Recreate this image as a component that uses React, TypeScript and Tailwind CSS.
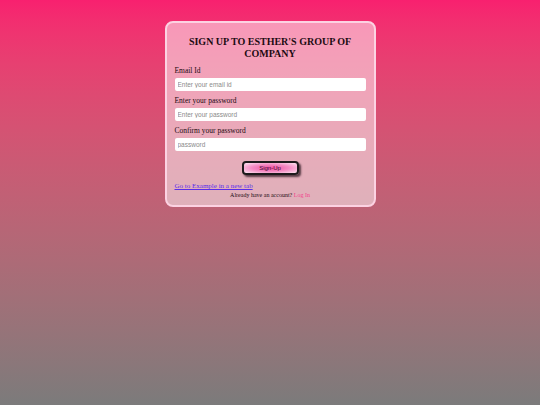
import React from 'react';

export default function App() {
  return (
    <div className="min-h-[405px] w-full bg-gradient-to-b from-[#f8206f] to-[#7b7b7b] pt-[21px] font-['Liberation_Serif',serif]">
      <div className="mx-auto w-[211px] rounded-[8px] border-2 border-[#fcd2e2] bg-white/50 px-[8px] pt-[13px] pb-[6px] text-[#1c0b12]">
        <h2 className="text-center text-[10px] font-bold leading-[11.5px]">
          SIGN UP TO ESTHER'S GROUP OF COMPANY
        </h2>

        <form className="mt-[7px]" onSubmit={(e) => e.preventDefault()}>
          <label className="block text-[7.5px] leading-[9px]">Email Id</label>
          <input
            type="email"
            placeholder="Enter your email id"
            className="mt-[3px] block h-[13px] w-full rounded-[2px] bg-white px-[3px] font-['Liberation_Sans',sans-serif] text-[6.5px] outline-none placeholder:text-[#8a8a8a]"
          />

          <label className="mt-[5px] block text-[7.5px] leading-[9px]">Enter your password</label>
          <input
            type="password"
            placeholder="Enter your password"
            className="mt-[3px] block h-[13px] w-full rounded-[2px] bg-white px-[3px] font-['Liberation_Sans',sans-serif] text-[6.5px] outline-none placeholder:text-[#8a8a8a]"
          />

          <label className="mt-[5px] block text-[7.5px] leading-[9px]">Confirm your password</label>
          <input
            type="password"
            placeholder="password"
            className="mt-[3px] block h-[13px] w-full rounded-[2px] bg-white px-[3px] font-['Liberation_Sans',sans-serif] text-[6.5px] outline-none placeholder:text-[#8a8a8a]"
          />

          <div className="mt-[10px] flex justify-center">
            <button
              type="submit"
              className="h-[14px] w-[57px] rounded-[4px] border-2 border-[#1e1a1c] bg-[radial-gradient(ellipse_at_center,#f04ea0_0%,#f58cc4_50%,#fde7f2_100%)] font-['Liberation_Sans',sans-serif] text-[6px] leading-none text-[#3d0a30] shadow-[2px_2px_2px_rgba(40,20,30,0.75)]"
            >
              Sign-Up
            </button>
          </div>
        </form>

        <div className="mt-[7px]">
          <a
            href="https://example.com"
            target="_blank"
            rel="noreferrer"
            className="block text-[7px] leading-[9px] text-[#5b2ee8] underline"
          >
            Go to Example in a new tab
          </a>
          <p className="text-center text-[6px] leading-[8px]">
            Already have an account? <span className="text-[#f2408c]">Log In</span>
          </p>
        </div>
      </div>
    </div>
  );
}
